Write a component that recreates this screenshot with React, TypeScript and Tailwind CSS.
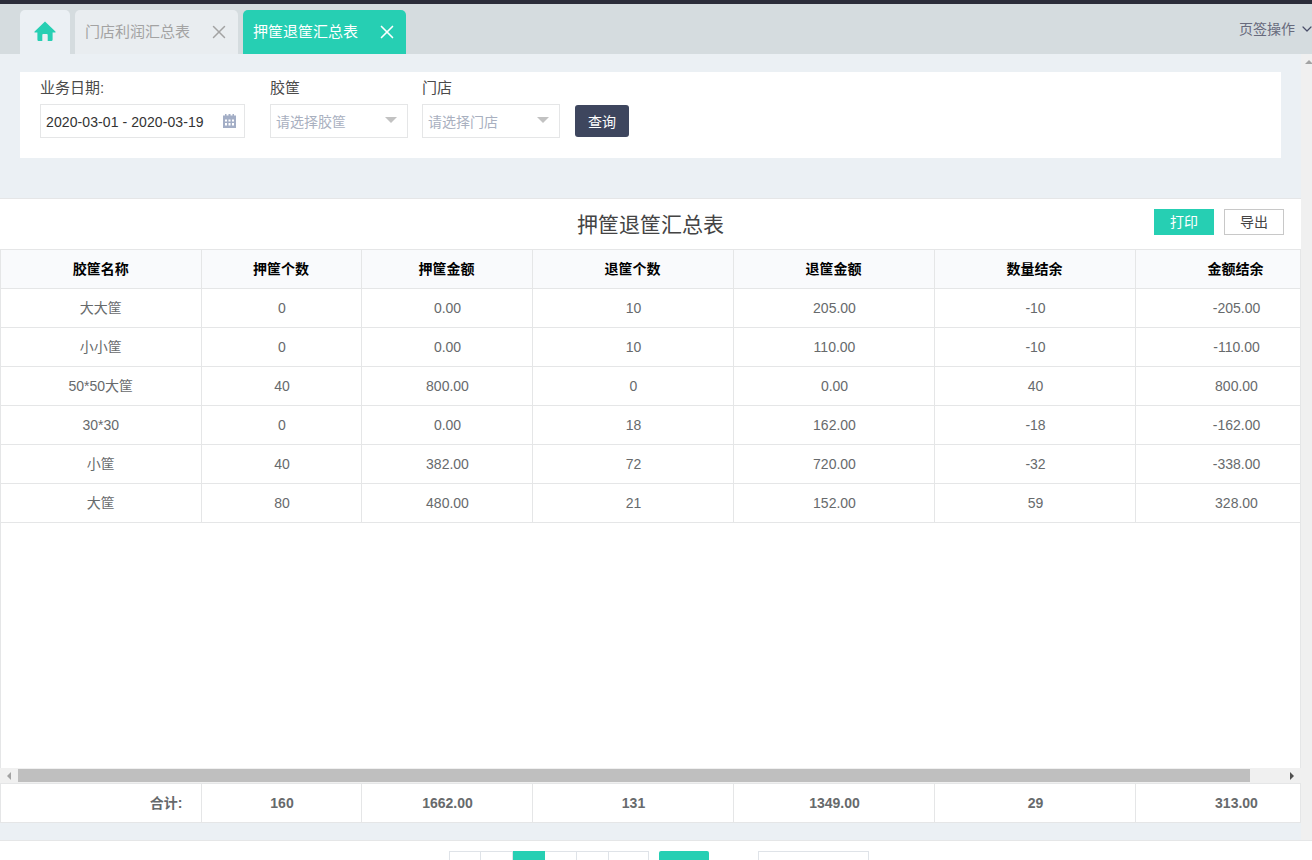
import React from 'react';
import { X, ChevronDown } from 'lucide-react';

const FONT = '"Liberation Sans", "Noto Sans CJK SC", sans-serif';

const COLS = [200, 160, 171, 201, 201, 201, 201];
const HEADERS = ['胶筐名称', '押筐个数', '押筐金额', '退筐个数', '退筐金额', '数量结余', '金额结余'];
const ROWS = [
  ['大大筐', '0', '0.00', '10', '205.00', '-10', '-205.00'],
  ['小小筐', '0', '0.00', '10', '110.00', '-10', '-110.00'],
  ['50*50大筐', '40', '800.00', '0', '0.00', '40', '800.00'],
  ['30*30', '0', '0.00', '18', '162.00', '-18', '-162.00'],
  ['小筐', '40', '382.00', '72', '720.00', '-32', '-338.00'],
  ['大筐', '80', '480.00', '21', '152.00', '59', '328.00'],
];
const TOTALS = ['160', '1662.00', '131', '1349.00', '29', '313.00'];

function Select({ placeholder }: { placeholder: string }) {
  return (
    <div className="flex h-[34px] w-[138px] items-center justify-between border border-[#e5e6e7] pl-[5px] pr-[10px] text-[14px] text-[#a9b0c0]">
      <span className="pt-[2px]">{placeholder}</span>
      <span className="mb-[2px] h-0 w-0 border-x-[6px] border-t-[6px] border-x-transparent border-t-[#c2c2c2]" />
    </div>
  );
}

function Colgroup() {
  return (
    <colgroup>
      {COLS.map((w, i) => (
        <col key={i} style={{ width: w }} />
      ))}
    </colgroup>
  );
}

export default function App() {
  return (
    <div className="flex h-[860px] w-[1312px] flex-col overflow-hidden bg-white" style={{ fontFamily: FONT }}>
      <div className="h-[4px] shrink-0 bg-[#2b2d3a]" />

      {/* tabs */}
      <div className="flex h-[50px] shrink-0 items-end bg-[#d5dcdf] pl-[20px]">
        <div className="flex h-[44px] w-[50px] items-center justify-center rounded-t-[5px] bg-[#ebf0f4]">
          <svg viewBox="0 0 24 24" className="h-[24px] w-[24px]" fill="#26cfb3">
            <path d="M12 1.6 1.6 11.4c-.5.5-.2 1.2.5 1.2h2.3v6.9c0 1 .6 1.6 1.6 1.6h3.3v-6.2c0-.5.3-.8.8-.8h3.8c.5 0 .8.3.8.8v6.2h3.3c1 0 1.6-.6 1.6-1.6v-6.9h2.3c.7 0 1-.7.5-1.2z" />
          </svg>
        </div>
        <div className="ml-[5px] flex h-[44px] w-[163px] items-center justify-between rounded-t-[5px] bg-[#e9edf0] pl-[10px] pr-[8px] text-[15px] text-[#a3a3a3]">
          <span>门店利润汇总表</span>
          <X className="h-[22px] w-[22px] text-[#a3a3a3]" strokeWidth={1.6} />
        </div>
        <div className="ml-[5px] flex h-[44px] w-[163px] items-center justify-between rounded-t-[5px] bg-[#26cfb3] pl-[10px] pr-[8px] text-[15px] text-white">
          <span>押筐退筐汇总表</span>
          <X className="h-[22px] w-[22px] text-white" strokeWidth={1.8} />
        </div>
        <div className="ml-auto flex h-[50px] items-center gap-[4px] text-[14px] text-[#676a7c]">
          <span>页签操作</span>
          <ChevronDown className="mr-[-3px] h-[16px] w-[16px] text-[#4a4e69]" strokeWidth={1.8} />
        </div>
      </div>

      <div className="flex min-h-0 flex-1">
        <div className="flex w-[1301px] shrink-0 flex-col bg-[#ebf0f4]">
          {/* filter */}
          <div className="mx-[20px] mt-[18px] flex h-[86px] w-[1261px] shrink-0 items-start bg-white pl-[20px] pt-[7px] text-[14px] text-[#4a4a4a]">
            <div className="w-[205px]">
              <div className="h-[25px] text-[15px] leading-[17px]">业务日期:</div>
              <div className="flex h-[34px] items-center justify-between border border-[#e5e6e7] pl-[5px] pr-[8px] text-[#333]">
                <span className="pt-[2px] tracking-[0.09px]">2020-03-01 - 2020-03-19</span>
                <svg viewBox="0 0 13 14" className="mb-[1px] h-[14px] w-[13px]" fill="#a3aec6">
                  <path
                    fillRule="evenodd"
                    d="M2 0h1.5v1.5h2V0H7.5v1.5h2V0H11v1.5h2V14H0V1.5h2zM2 5.5v2h2v-2zm3.5 0v2h2v-2zm3.5 0v2h2v-2zM2 9v2.5h2V9zm3.5 0v2.5h2V9zM9 9v2.5h2V9z"
                  />
                </svg>
              </div>
            </div>
            <div className="ml-[25px]">
              <div className="h-[25px] text-[15px] leading-[17px]">胶筐</div>
              <Select placeholder="请选择胶筐" />
            </div>
            <div className="ml-[14px]">
              <div className="h-[25px] text-[15px] leading-[17px]">门店</div>
              <Select placeholder="请选择门店" />
            </div>
            <button className="ml-[15px] mt-[26px] h-[32px] w-[54px] rounded-[3px] bg-[#3e465e] pt-[2px] text-[14px] text-white">查询</button>
          </div>

          {/* table card */}
          <div className="mt-[40px] flex h-[625px] shrink-0 flex-col border-t border-[#e5e6e7] bg-white">
            <div className="relative flex h-[50px] shrink-0 items-center justify-center pt-[2px] text-[21px] text-[#444]">
              押筐退筐汇总表
              <div className="absolute right-[17px] top-[10px] flex gap-[10px] text-[14px]">
                <button className="h-[26px] w-[60px] bg-[#26cfb3] text-white">打印</button>
                <button className="h-[26px] w-[60px] border border-[#c8c8c8] bg-white text-[#444]">导出</button>
              </div>
            </div>

            <div className="min-h-0 flex-1 overflow-hidden border-x border-[#e5e6e7]">
              <table className="w-[1335px] table-fixed border-collapse text-center text-[14px] text-[#676a6c]">
                <Colgroup />
                <thead>
                  <tr className="h-[39px] border-y border-[#e5e6e7] bg-[#f9fafc] text-[14px] font-bold text-black">
                    {HEADERS.map((h) => (
                      <th key={h} className="border-r border-[#e5e6e7] font-bold">{h}</th>
                    ))}
                  </tr>
                </thead>
                <tbody>
                  {ROWS.map((r) => (
                    <tr key={r[0]} className="h-[39px] border-b border-[#e5e6e7]">
                      {r.map((c, i) => (
                        <td key={i} className={i === 0 ? 'border-r border-[#e5e6e7]' : 'border-r border-[#e5e6e7] pl-[2px]'}>{c}</td>
                      ))}
                    </tr>
                  ))}
                </tbody>
              </table>
            </div>

            {/* horizontal scrollbar */}
            <div className="flex h-[15px] shrink-0 items-center bg-[#f0f0f0]">
              <div className="flex w-[18px] justify-center">
                <span className="h-0 w-0 border-y-[4px] border-r-[4px] border-y-transparent border-r-[#a3a3a3]" />
              </div>
              <div className="h-[13px] w-[1232px] bg-[#bfbfbf]" />
              <div className="flex flex-1 justify-end pr-[7px]">
                <span className="h-0 w-0 border-y-[4px] border-l-[4px] border-y-transparent border-l-[#505050]" />
              </div>
            </div>

            <div className="h-[40px] shrink-0 overflow-hidden border-x border-[#e5e6e7]">
              <table className="w-[1335px] table-fixed border-collapse text-center text-[14px] font-bold text-[#676a6c]">
                <Colgroup />
                <tbody>
                  <tr className="h-[39px] border-y border-[#e5e6e7]">
                    <td className="border-r border-[#e5e6e7] pr-[18px] text-right">合计:</td>
                    {TOTALS.map((t, i) => (
                      <td key={i} className="border-r border-[#e5e6e7] pl-[2px]">{t}</td>
                    ))}
                  </tr>
                </tbody>
              </table>
            </div>
          </div>

          <div className="flex-1 bg-[#ebf0f4]" />
        </div>

        {/* page scrollbar */}
        <div className="flex w-[11px] shrink-0 justify-end bg-[#f0f0f0] pt-[6px]">
          <span className="mr-[-1px] h-0 w-0 border-x-[4px] border-b-[4px] border-x-transparent border-b-[#a3a3a3]" />
        </div>
      </div>

      {/* pagination, cut off by the window edge */}
      <div className="flex h-[20px] w-full shrink-0 items-start border-t border-[#e5e6e7] bg-white pl-[449px] pt-[10px]">
        <div className="flex">
          <span className="h-[30px] w-[32px] border border-[#dfe3e8]" />
          <span className="h-[30px] w-[32px] border-y border-r border-[#dfe3e8]" />
          <span className="h-[30px] w-[32px] bg-[#26cfb3]" />
          <span className="h-[30px] w-[32px] border-y border-r border-[#dfe3e8]" />
          <span className="h-[30px] w-[32px] border-y border-r border-[#dfe3e8]" />
          <span className="h-[30px] w-[40px] border-y border-r border-[#dfe3e8]" />
        </div>
        <span className="ml-[10px] h-[30px] w-[50px] rounded-t-[2px] bg-[#26cfb3]" />
        <span className="ml-[49px] h-[30px] w-[111px] border border-[#dfe3e8]" />
      </div>
    </div>
  );
}
